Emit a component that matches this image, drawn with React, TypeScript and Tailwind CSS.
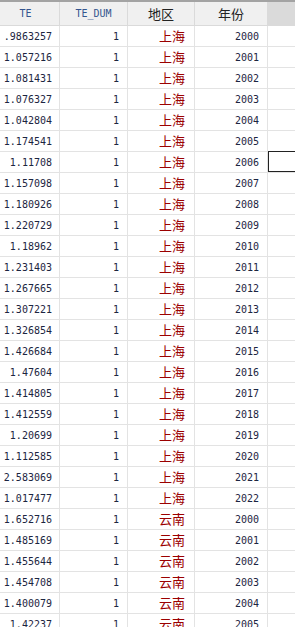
import React from 'react';

const rows: [string, string, string][] = [
  ['.9863257', '上海', '2000'],
  ['1.057216', '上海', '2001'],
  ['1.081431', '上海', '2002'],
  ['1.076327', '上海', '2003'],
  ['1.042804', '上海', '2004'],
  ['1.174541', '上海', '2005'],
  ['1.11708', '上海', '2006'],
  ['1.157098', '上海', '2007'],
  ['1.180926', '上海', '2008'],
  ['1.220729', '上海', '2009'],
  ['1.18962', '上海', '2010'],
  ['1.231403', '上海', '2011'],
  ['1.267665', '上海', '2012'],
  ['1.307221', '上海', '2013'],
  ['1.326854', '上海', '2014'],
  ['1.426684', '上海', '2015'],
  ['1.47604', '上海', '2016'],
  ['1.414805', '上海', '2017'],
  ['1.412559', '上海', '2018'],
  ['1.20699', '上海', '2019'],
  ['1.112585', '上海', '2020'],
  ['2.583069', '上海', '2021'],
  ['1.017477', '上海', '2022'],
  ['1.652716', '云南', '2000'],
  ['1.485169', '云南', '2001'],
  ['1.455644', '云南', '2002'],
  ['1.454708', '云南', '2003'],
  ['1.400079', '云南', '2004'],
  ['1.42237', '云南', '2005'],
];

const mono = "[font-family:'DejaVu_Sans_Mono',monospace]";

export default function App() {
  return (
    <div className="w-[295px] h-[627px] overflow-hidden bg-white border-t-2 border-[#a3a3a3]">
      {/* Header */}
      <div className="grid grid-cols-[60px_68px_67px_73px_1fr] h-[24px] bg-[#f0f0f0] border-b border-[#dadada]">
        <div className={`flex items-center justify-center pr-2 border-r border-[#dadada] text-[10px] text-[#34558f] ${mono}`}>TE</div>
        <div className={`flex items-center justify-center border-r border-[#dadada] text-[10px] text-[#34558f] ${mono}`}>TE_DUM</div>
        <div className="flex items-center justify-center border-r border-[#dadada] text-[13px] text-[#222] [font-family:'Noto_Sans_CJK_SC',sans-serif]">地区</div>
        <div className="flex items-center justify-center border-r border-[#dadada] text-[13px] text-[#222] [font-family:'Noto_Sans_CJK_SC',sans-serif]">年份</div>
        <div className="bg-[#dadada]" />
      </div>

      {/* Body */}
      <div className="flex flex-col">
        {rows.map(([te, region, year], i) => (
          <div key={i} className="grid grid-cols-[60px_68px_67px_73px_1fr] h-[21px] shrink-0 border-b border-[#e3e3e3]">
            <div className={`flex items-center justify-end pr-[7px] border-r border-[#e3e3e3] text-[10px] text-[#1c2541] ${mono}`}>{te}</div>
            <div className={`flex items-center justify-end pr-[8px] border-r border-[#e3e3e3] text-[10px] text-[#1c2541] ${mono}`}>1</div>
            <div className="flex items-center justify-end pr-[9px] border-r border-[#e3e3e3] text-[13px] text-[#9b0000] [font-family:'Noto_Sans_CJK_SC',sans-serif]">{region}</div>
            <div className={`flex items-center justify-end pr-[8px] border-r border-[#e3e3e3] text-[10px] text-[#1c2541] ${mono}`}>{year}</div>
            <div className={i === 6 ? 'border-[1.5px] border-r-0 border-[#222] -mt-px' : ''} />
          </div>
        ))}
      </div>
    </div>
  );
}
